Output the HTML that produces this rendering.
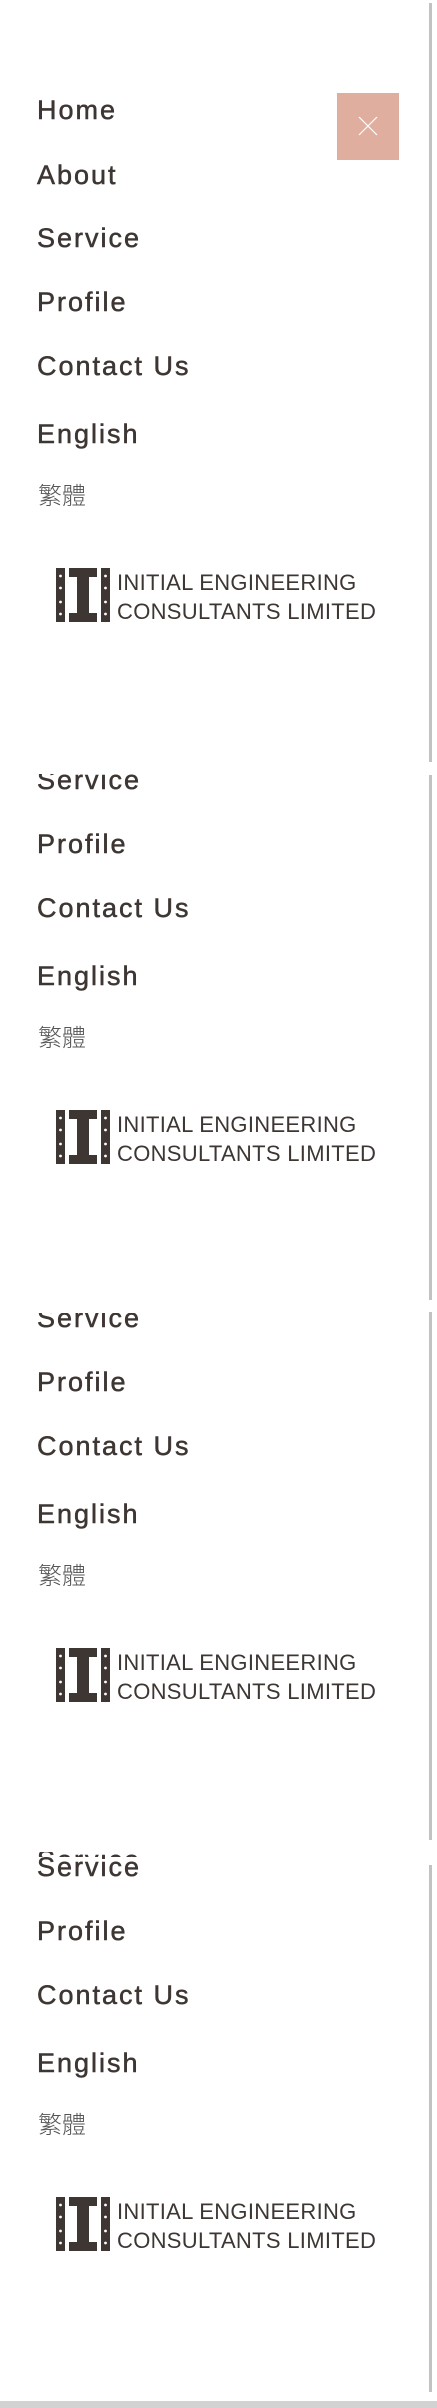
<!DOCTYPE html>
<html><head><meta charset="utf-8">
<style>
html,body{margin:0;padding:0;background:#fff;}
body{width:437px;height:2408px;position:relative;overflow:hidden;font-family:"Liberation Sans",sans-serif;color:#3d3633;}
.sec{position:absolute;left:0;width:437px;overflow:hidden;}
.blk{position:absolute;left:0;top:0;width:437px;height:800px;}
.m{position:absolute;left:37px;font-size:27px;line-height:30px;letter-spacing:2px;font-weight:normal;white-space:nowrap;-webkit-text-stroke:0.5px #3d3633;}
.zh{position:absolute;left:38px;font-size:24px;line-height:28px;color:#555;font-family:"Liberation Sans","Noto Sans CJK TC",sans-serif;font-weight:300;}
.logo{position:absolute;left:56px;width:340px;height:54px;}
.lt{position:absolute;left:61px;top:0px;font-size:22px;line-height:29px;letter-spacing:0.3px;color:#3d3633;white-space:nowrap;}
.bar{position:absolute;left:429px;width:3px;background:#c2c2c2;}
.close{position:absolute;left:337px;top:93px;width:62px;height:67px;background:#e0ae9e;}
</style></head><body>

<div class="sec" style="top:0;height:762px;">
 <div class="blk" style="top:0">
  <div class="m" style="top:95px">Home</div>
  <div class="m" style="top:160px">About</div>
  <div class="m" style="top:223px">Service</div>
  <div class="m" style="top:287px">Profile</div>
  <div class="m" style="top:351px">Contact Us</div>
  <div class="m" style="top:419px">English</div>
  <div class="zh" style="top:483px">繁體</div>
  <div class="logo" style="top:568px">
   <svg width="54" height="54" viewBox="0 0 54 54" style="position:absolute;left:0;top:0">
    <rect x="0" y="0" width="9" height="54" fill="#3d3633"/>
    <rect x="45" y="0" width="9" height="54" fill="#3d3633"/>
    <rect x="13" y="0" width="28" height="9" fill="#3d3633"/>
    <rect x="13" y="45" width="28" height="9" fill="#3d3633"/>
    <rect x="21" y="9" width="12" height="36" fill="#3d3633"/>
    <g fill="#fff"><circle cx="4.5" cy="8" r="1.4"/><circle cx="4.5" cy="20" r="1.4"/><circle cx="4.5" cy="34" r="1.4"/><circle cx="4.5" cy="46" r="1.4"/>
    <circle cx="49.5" cy="8" r="1.4"/><circle cx="49.5" cy="20" r="1.4"/><circle cx="49.5" cy="34" r="1.4"/><circle cx="49.5" cy="46" r="1.4"/></g>
   </svg>
   <div class="lt">INITIAL ENGINEERING<br>CONSULTANTS LIMITED</div>
  </div>
 </div>
</div>
<div class="close"><svg width="62" height="67" viewBox="0 0 62 67"><path d="M22 24 L40 42 M40 24 L22 42" stroke="#fff" stroke-width="1.2" fill="none"/></svg></div>
<div class="bar" style="top:3px;height:759px"></div>

<div class="sec" style="top:774px;height:526px;">
 <div class="blk" style="top:-232px" id="b2"></div>
</div>
<div class="bar" style="top:775px;height:525px"></div>

<div class="sec" style="top:1313px;height:527px;">
 <div class="blk" style="top:-233px" id="b3"></div>
</div>
<div class="bar" style="top:1312px;height:528px"></div>

<div class="sec" style="top:1852px;height:550px;">
 <div class="blk" style="top:-223px" id="b4"></div>
 <div class="blk" style="top:-230px" id="b5"></div>
</div>
<div class="bar" style="top:1865px;height:527px"></div>
<div style="position:absolute;left:0;top:2401px;width:437px;height:7px;background:#d2d2d2"></div>

<script>
var src=document.querySelector('.blk').innerHTML;
['b2','b3','b4'].forEach(function(id){document.getElementById(id).innerHTML=src;});
var b5=document.getElementById('b5');b5.innerHTML='<div class="m" style="top:223px;clip-path:inset(0 0 60% 0)">Service</div>';
</script>
</body></html>
